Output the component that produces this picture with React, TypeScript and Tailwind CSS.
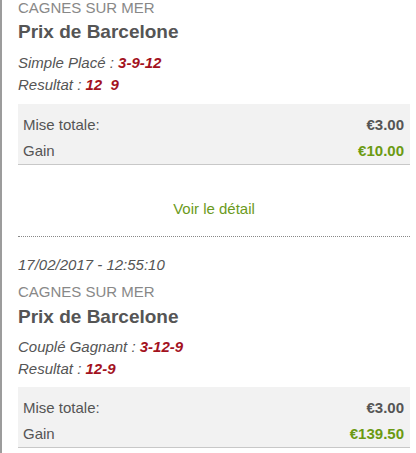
import React from 'react';

type Bet = {
  date?: string;
  track: string;
  race: string;
  betType: string;
  selection: string;
  result: string;
  stake: string;
  gain: string;
};

const bets: Bet[] = [
  {
    track: 'CAGNES SUR MER',
    race: 'Prix de Barcelone',
    betType: 'Simple Placé',
    selection: '3-9-12',
    result: '12  9',
    stake: '€3.00',
    gain: '€10.00',
  },
  {
    date: '17/02/2017 - 12:55:10',
    track: 'CAGNES SUR MER',
    race: 'Prix de Barcelone',
    betType: 'Couplé Gagnant',
    selection: '3-12-9',
    result: '12-9',
    stake: '€3.00',
    gain: '€139.50',
  },
];

const BetCard = ({ bet, first }: { bet: Bet; first?: boolean }) => (
  <div className={first ? '-mt-[3px]' : 'mt-[17px]'}>
    {bet.date && (
      <div className="text-[15px] leading-[22px] italic text-[#555] mb-[5px]">{bet.date}</div>
    )}
    <div className="text-[15px] leading-[22px] text-[#888]">{bet.track}</div>
    <div className={`text-[19px] leading-[24px] font-bold text-[#555] ${first ? 'mt-[1px]' : 'mt-[2px]'}`}>
      {bet.race}
    </div>

    <div className={`${first ? 'mt-[8px]' : 'mt-[7px]'} text-[15px] leading-[22px] italic text-[#555]`}>
      {bet.betType} : <span className="font-bold text-[#a3121e]">{bet.selection}</span>
    </div>
    <div className="text-[15px] leading-[22px] italic text-[#555] whitespace-pre">
      Resultat : <span className="font-bold text-[#a3121e]">{bet.result}</span>
    </div>

    <div
      className={`${first ? 'mt-[8px]' : 'mt-[7px]'} bg-[#f2f2f2] border-b border-[#c8c8c8] pt-2 pl-[5px] pr-[6px] text-[15px] text-[#555]`}
    >
      <div className="flex items-center justify-between h-[26px]">
        <span>Mise totale:</span>
        <span className="font-bold">{bet.stake}</span>
      </div>
      <div className="flex items-center justify-between h-[26px]">
        <span>Gain</span>
        <span className="font-bold text-[#6b9a12]">{bet.gain}</span>
      </div>
    </div>
  </div>
);

export default function App() {
  return (
    <div
      className="flex w-[416px] h-[453px] overflow-hidden bg-white"
      style={{ fontFamily: '"Liberation Sans", Arial, sans-serif' }}
    >
      <div className="w-[2px] shrink-0 bg-[#9c9c9c]" />
      <div className="flex-1 pl-4 pr-[6px]">
        <BetCard bet={bets[0]} first />
        <div className="pt-[33px] pb-[16px] text-center text-[15px] leading-[22px] text-[#6b9a1c] border-b border-dotted border-[#888]">
          Voir le détail
        </div>
        <BetCard bet={bets[1]} />
      </div>
    </div>
  );
}
